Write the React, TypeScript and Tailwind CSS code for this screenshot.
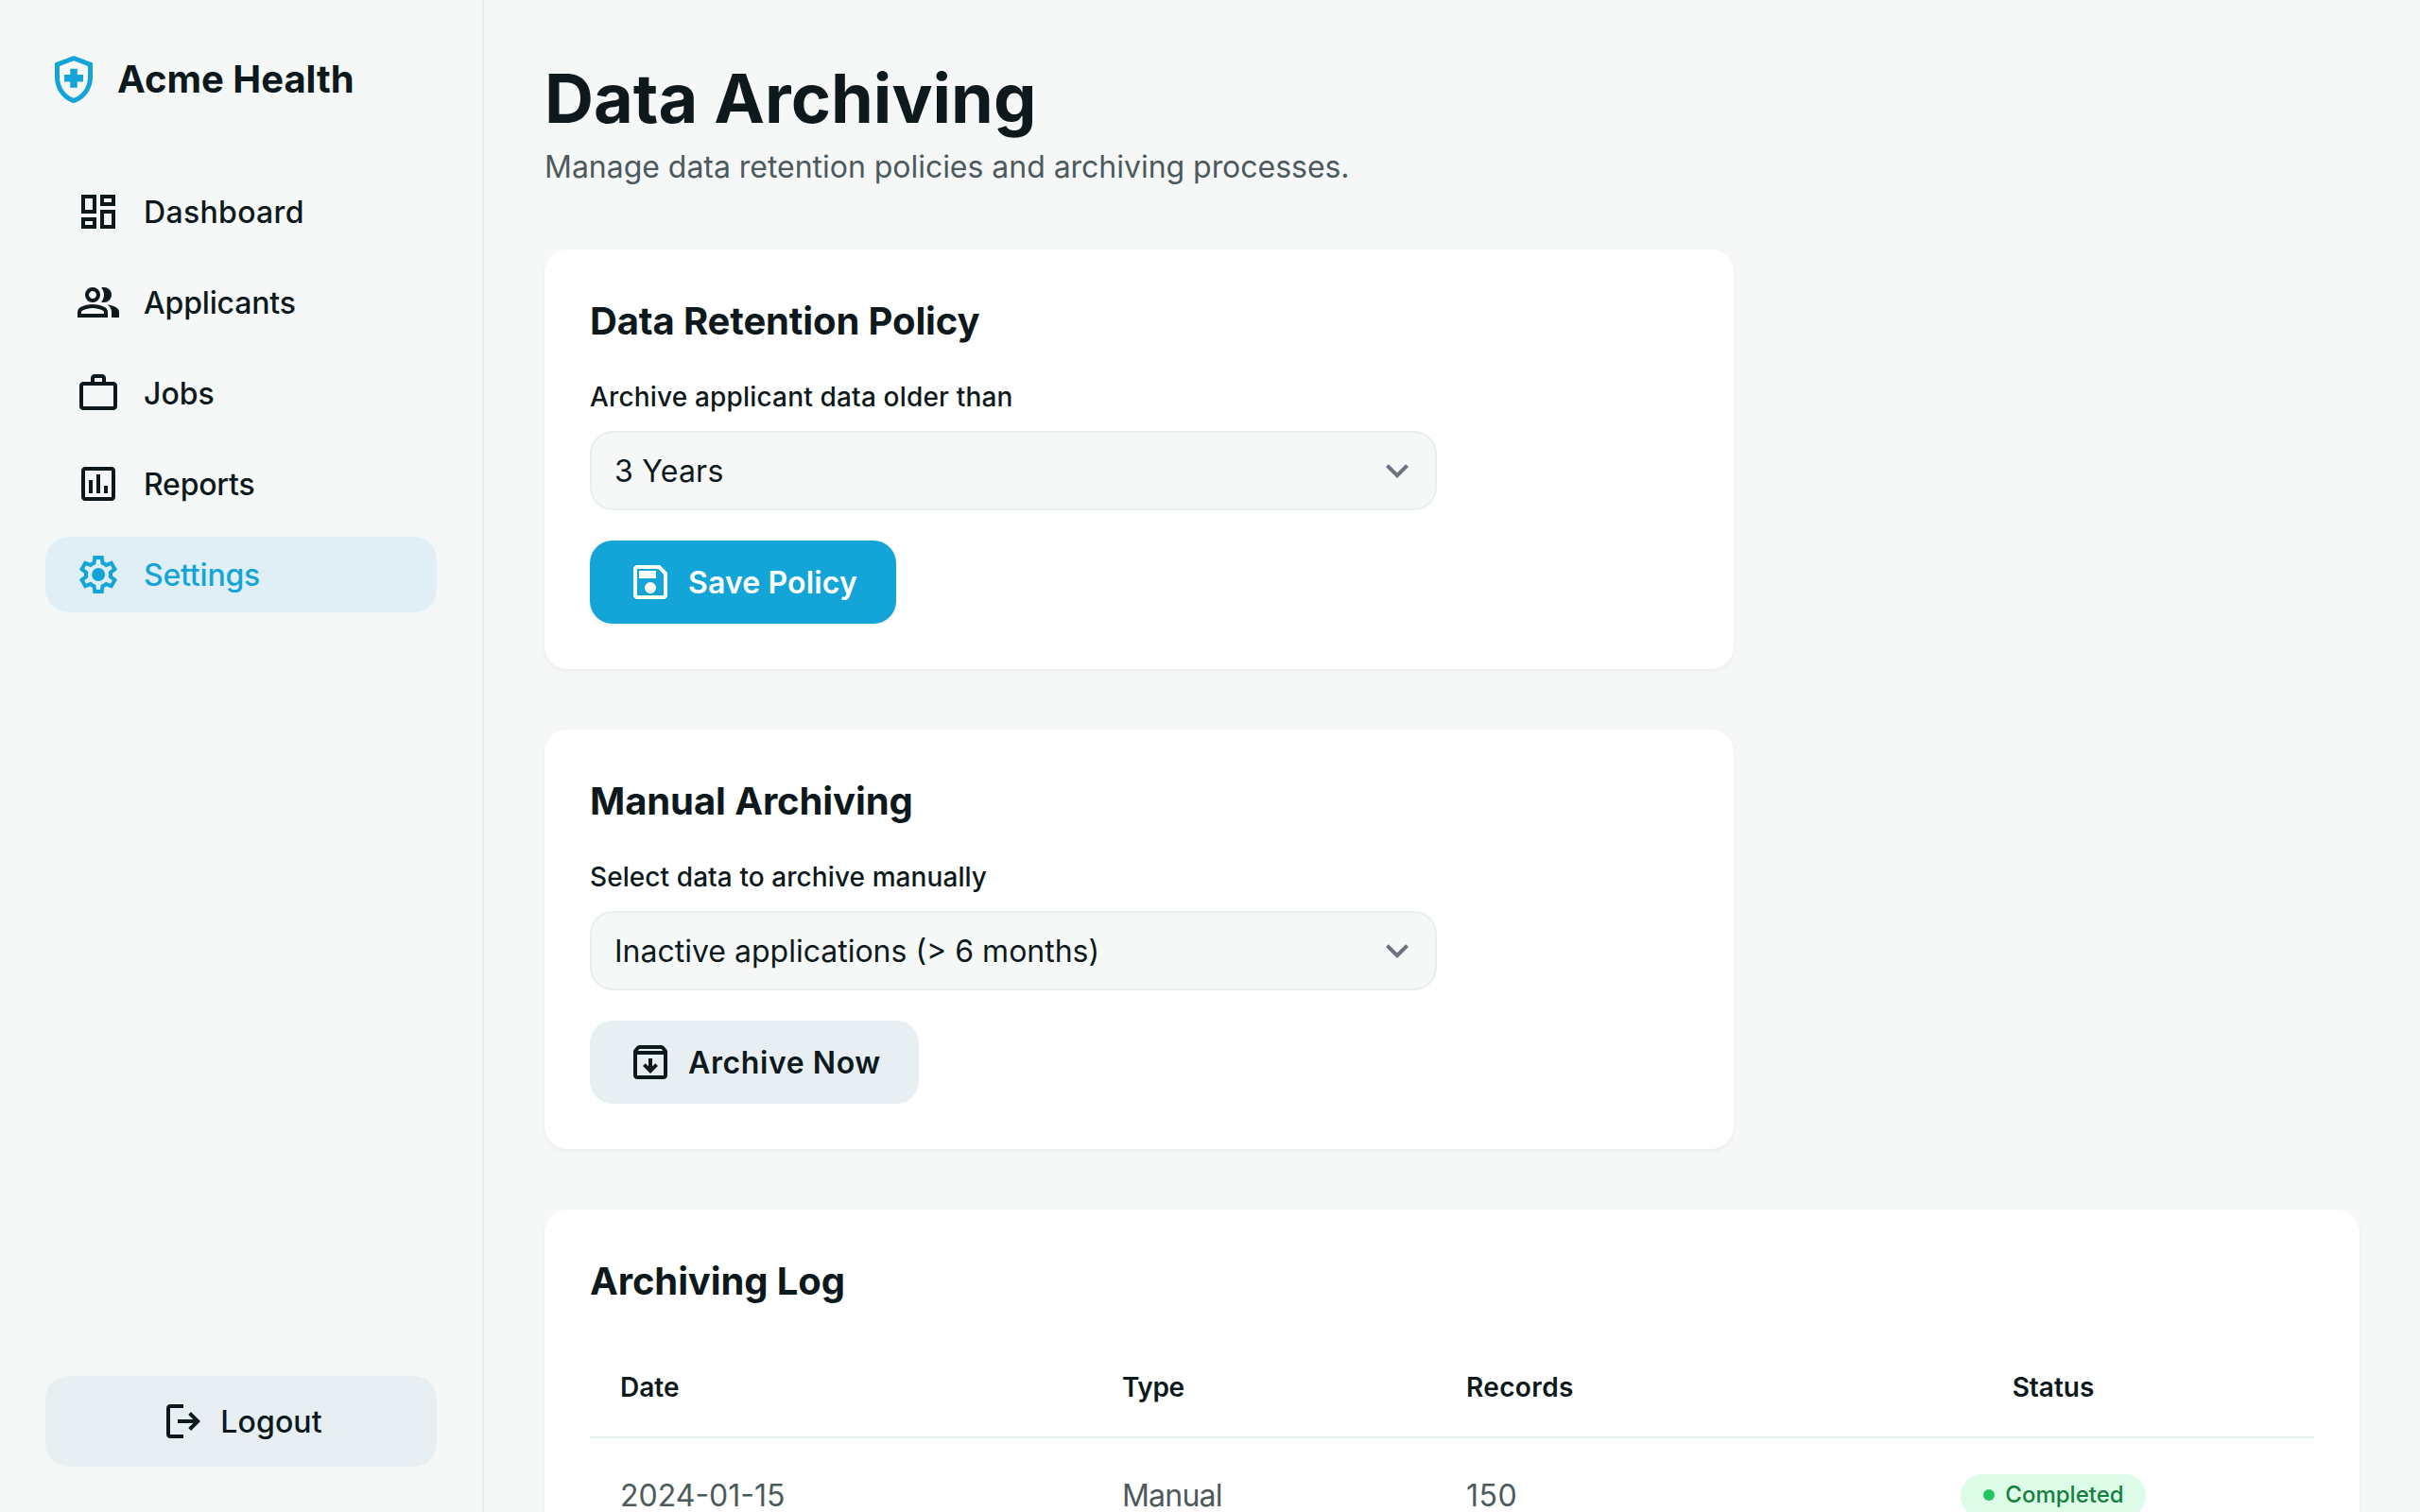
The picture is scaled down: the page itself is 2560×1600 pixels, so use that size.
import { MdOutlineDashboard, MdOutlineHealthAndSafety, MdExpandMore } from "react-icons/md";
import type { ReactNode } from "react";

// material symbols paths, viewBox is the same for all of them
const Symbol = ({ d }: { d: string }) => (
  <svg viewBox="0 -960 960 960" className="h-6 w-6 shrink-0" fill="currentColor">
    <path d={d} />
  </svg>
);

const icons = {
  group:
    "M40-160v-112q0-34 17.5-62.5T104-378q62-31 126-46.5T360-440q66 0 130 15.5T616-378q29 15 46.5 43.5T680-272v112H40Zm720 0v-120q0-44-24.5-84.5T666-434q51 6 96 20.5t84 35.5q36 20 55 44.5t19 53.5v120H760ZM360-480q-66 0-113-47t-47-113q0-66 47-113t113-47q66 0 113 47t47 113q0 66-47 113t-113 47Zm400-160q0 66-47 113t-113 47q-11 0-28-2.5t-28-5.5q27-32 41.5-71t14.5-81q0-42-14.5-81T544-792q14-5 28-6.5t28-1.5q66 0 113 47t47 113ZM120-240h480v-32q0-11-5.5-20T580-306q-54-27-109-40.5T360-360q-56 0-111 13.5T140-306q-9 5-14.5 14t-5.5 20v32Zm240-320q33 0 56.5-23.5T440-640q0-33-23.5-56.5T360-720q-33 0-56.5 23.5T280-640q0 33 23.5 56.5T360-560Z",
  work: "M160-120q-33 0-56.5-23.5T80-200v-440q0-33 23.5-56.5T160-720h160v-80q0-33 23.5-56.5T400-880h160q33 0 56.5 23.5T640-800v80h160q33 0 56.5 23.5T880-640v440q0 33-23.5 56.5T800-120H160Zm0-80h640v-440H160v440Zm240-520h160v-80H400v80Z",
  reports:
    "M200-120q-33 0-56.5-23.5T120-200v-560q0-33 23.5-56.5T200-840h560q33 0 56.5 23.5T840-760v560q0 33-23.5 56.5T760-120H200Zm0-80h560v-560H200v560Zm80-80h80v-280h-80v280Zm160 0h80v-400h-80v400Zm160 0h80v-160h-80v160Z",
  settings:
    "m370-80-16-128q-13-5-24.5-12T307-235l-119 50L78-375l103-78q-1-7-1-13.5v-27q0-6.5 1-13.5L78-585l110-190 119 50q11-8 23-15t24-12l16-128h220l16 128q13 5 24.5 12t22.5 15l119-50 110 190-103 78q1 7 1 13.5v27q0 6.5-2 13.5l103 78-110 190-118-50q-11 8-23 15t-24 12L590-80H370Zm70-80h79l14-106q31-8 57.5-23.5T639-327l99 41 39-68-86-65q5-14 7-29.5t2-31.5q0-16-2-31.5t-7-29.5l86-65-39-68-99 42q-22-23-48.5-38.5T533-694l-13-106h-79l-14 106q-31 8-57.5 23.5T321-633l-99-41-39 68 86 64q-5 15-7 30t-2 32q0 16 2 31t7 30l-86 65 39 68 99-42q22 23 48.5 38.5T427-266l13 106Zm42-180q58 0 99-41t41-99q0-58-41-99t-99-41q-59 0-99.5 41T342-480q0 58 40.5 99t99.5 41Z",
  save: "M840-680v480q0 33-23.5 56.5T760-120H200q-33 0-56.5-23.5T120-200v-560q0-33 23.5-56.5T200-840h480l160 160Zm-80 34L646-760H200v560h560v-446ZM480-240q50 0 85-35t35-85q0-50-35-85t-85-35q-50 0-85 35t-35 85q0 50 35 85t85 35ZM240-560h360v-160H240v160Z",
  archive:
    "M480-240l160-160-56-56-64 64v-168h-80v168l-64-64-56 56 160 160ZM200-640v440h560v-440H200Zm0 520q-33 0-56.5-23.5T120-200v-499q0-14 4.5-27t13.5-24l50-61q11-14 27.5-21.5T250-840h460q18 0 34.5 7.5T772-811l50 61q9 11 13.5 24t4.5 27v499q0 33-23.5 56.5T760-120H200Zm16-600h528l-34-40H250l-34 40Z",
  logout:
    "M200-120q-33 0-56.5-23.5T120-200v-560q0-33 23.5-56.5T200-840h280v80H200v560h280v80H200Zm440-160-55-58 102-102H360v-80h327L585-622l55-58 200 200-200 200Z",
};

const navItems: { label: string; icon: ReactNode; active?: boolean; tracking: string }[] = [
  { label: "Dashboard", icon: <MdOutlineDashboard size={24} />, tracking: "tracking-[0.16px]" },
  { label: "Applicants", icon: <Symbol d={icons.group} />, tracking: "tracking-[-0.08px]" },
  { label: "Jobs", icon: <Symbol d={icons.work} />, tracking: "tracking-normal" },
  { label: "Reports", icon: <Symbol d={icons.reports} />, tracking: "tracking-[-0.11px]" },
  { label: "Settings", icon: <Symbol d={icons.settings} />, active: true, tracking: "tracking-[-0.1px]" },
];

const FakeSelect = ({
  label,
  value,
  labelTracking,
  valueTracking,
}: {
  label: string;
  value: string;
  labelTracking: string;
  valueTracking: string;
}) => (
  <div>
    <p className={`mb-2 text-sm font-medium ${labelTracking}`}>{label}</p>
    <div className="flex h-[42px] w-[448px] items-center justify-between rounded-xl border border-[#e7eff3] bg-[#f6f8f8] pr-2 pl-3">
      <span className={valueTracking}>{value}</span>
      <MdExpandMore size={24} className="text-[#6b7280]" />
    </div>
  </div>
);

const Card = ({ title, tracking, children }: { title: string; tracking: string; children: ReactNode }) => (
  <section className="rounded-xl bg-white p-6 shadow-[0_1px_2px_rgba(0,0,0,0.05)]">
    <h2 className={`mb-4 text-xl font-bold ${tracking}`}>{title}</h2>
    {children}
  </section>
);

export default function App() {
  return (
    <div className="h-screen w-screen overflow-hidden bg-[#f6f8f8]">
      {/* page was designed at 1280x800 @2x */}
      <div className="flex h-[800px] w-[1280px] origin-top-left scale-200 font-['Inter',sans-serif] text-[#0d191c]">
        <aside className="flex w-64 shrink-0 flex-col border-r border-[#e7eff3] px-6 pt-[27px] pb-6">
          <div className="mb-[35px] flex items-center gap-2">
            <MdOutlineHealthAndSafety size={30} className="text-[#13a4d8]" />
            <span className="text-xl font-bold">Acme Health</span>
          </div>
          <nav className="flex flex-1 flex-col gap-2">
            {navItems.map((item) => (
              <a
                key={item.label}
                className={
                  item.active
                    ? `flex h-10 items-center gap-3 rounded-xl bg-[#e0eff5] px-4 font-medium text-[#13a4d8] ${item.tracking}`
                    : `flex h-10 items-center gap-3 rounded-xl px-4 font-medium ${item.tracking}`
                }
              >
                {item.icon}
                {item.label}
              </a>
            ))}
          </nav>
          <button className="flex h-12 w-full items-center justify-center gap-2 rounded-xl bg-[#e7eff3] font-medium tracking-[0.08px]">
            <Symbol d={icons.logout} />
            Logout
          </button>
        </aside>

        <main className="flex-1 p-8">
          <h1 className="text-4xl leading-10 font-bold">Data Archiving</h1>
          <p className="mt-1 tracking-[-0.015px] text-[#4c5a5e]">Manage data retention policies and archiving processes.</p>

          <div className="mt-8 flex flex-col gap-8">
            <div className="w-[629px]">
              <Card title="Data Retention Policy" tracking="tracking-[-0.07px]">
                <FakeSelect
                  label="Archive applicant data older than"
                  value="3 Years"
                  labelTracking="tracking-[0.085px]"
                  valueTracking="tracking-[0.115px]"
                />
                <button className="mt-4 flex h-11 items-center gap-2 rounded-xl bg-[#13a4d8] pr-[21px] pl-5 font-semibold tracking-[0.07px] text-white shadow-[0_1px_2px_rgba(0,0,0,0.05)]">
                  <Symbol d={icons.save} />
                  Save Policy
                </button>
              </Card>
            </div>
            <div className="w-[629px]">
              <Card title="Manual Archiving" tracking="tracking-[-0.05px]">
                <FakeSelect
                  label="Select data to archive manually"
                  value="Inactive applications (> 6 months)"
                  labelTracking="tracking-[0.04px]"
                  valueTracking="tracking-normal"
                />
                <button className="mt-4 flex h-11 items-center gap-2 rounded-xl bg-[#e7eff3] px-5 font-semibold tracking-[0.3px]">
                  <Symbol d={icons.archive} />
                  Archive Now
                </button>
              </Card>
            </div>
            <Card title="Archiving Log" tracking="tracking-[-0.06px]">
              <table className="w-full table-fixed text-left">
                <thead>
                  <tr className="border-b border-[#e7eff3] text-sm">
                    <th className="w-[265.5px] p-4 font-semibold">Date</th>
                    <th className="w-[182px] p-4 font-semibold tracking-[-0.2px]">Type</th>
                    <th className="w-[188.5px] p-4 font-semibold tracking-[0.18px]">Records</th>
                    <th className="p-4 text-center font-semibold">Status</th>
                  </tr>
                </thead>
                <tbody className="text-[#4c5a5e]">
                  <tr>
                    <td className="px-4">2024-01-15</td>
                    <td className="px-4 tracking-[-0.4px]">Manual</td>
                    <td className="px-4 tracking-[0.25px]">150</td>
                    <td className="px-4 py-[18.5px]">
                      <div className="flex justify-center">
                        <span className="flex h-[23px] items-center gap-1.5 rounded-full bg-[#dcfce7] px-3 text-xs font-medium text-[#15803d]">
                          <span className="h-1.5 w-1.5 rounded-full bg-[#22c55e]" />
                          Completed
                        </span>
                      </div>
                    </td>
                  </tr>
                </tbody>
              </table>
            </Card>
          </div>
        </main>
      </div>
    </div>
  );
}
